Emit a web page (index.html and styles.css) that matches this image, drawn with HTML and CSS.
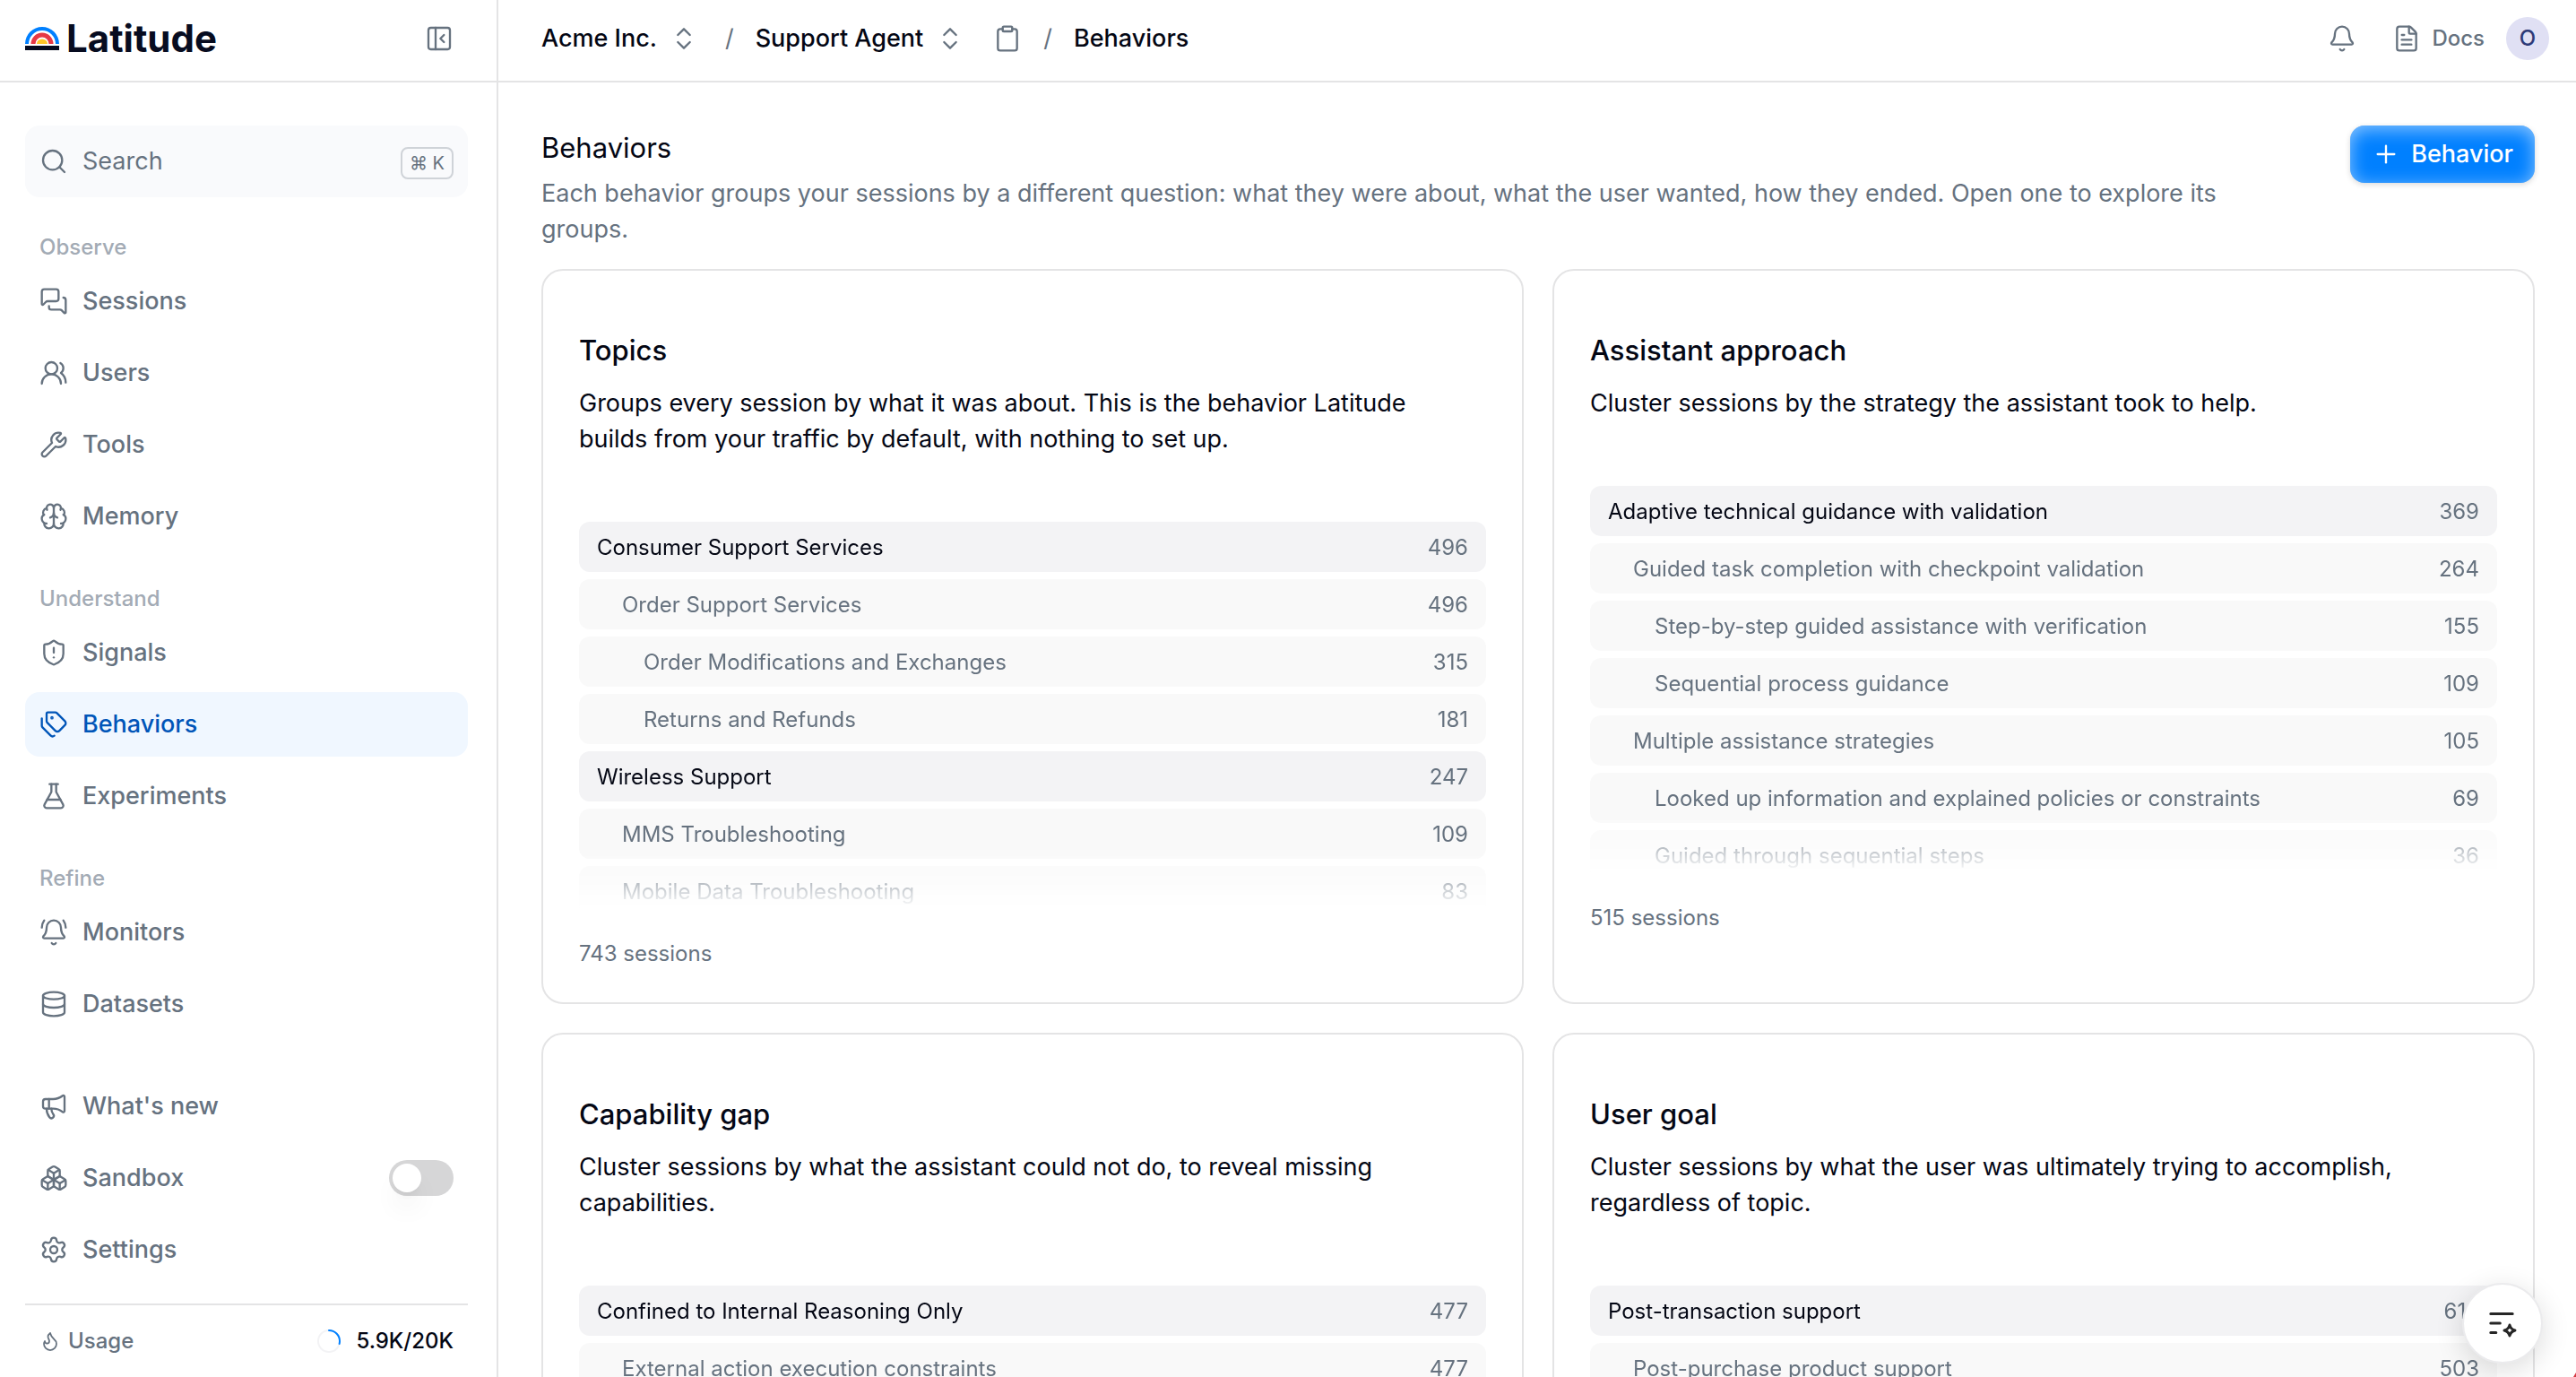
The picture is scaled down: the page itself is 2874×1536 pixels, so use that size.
FILE: index.html
```html
<!DOCTYPE html>
<html lang="en">
<head>
<meta charset="utf-8">
<title>Behaviors - Latitude</title>
<link rel="stylesheet" href="styles.css">
</head>
<body>
<div class="app">
  <aside class="sidebar">
    <div class="topbar sidebar-top">
      <a class="brand" href="#">
        <svg class="brand-mark" viewBox="0 0 38 26" aria-hidden="true">
          <path d="M0 19a19 19 0 0 1 38 0h-4a15 15 0 0 0-30 0z" fill="#0080ff"/>
          <path d="M6.500 19a12.500 12.500 0 0 1 25 0h-5a7.500 7.500 0 0 0-15 0z" fill="#e63946"/>
          <path d="M13 19a6 5.500 0 0 1 12 0z" fill="#ffc629"/>
          <path d="M0 21h38v5H0z" fill="#070c20"/>
        </svg>
        <span>Latitude</span>
      </a>
      <button class="icon-button" type="button" aria-label="Collapse sidebar">
        <svg class="icon" viewBox="0 0 24 24"><rect x="3" y="3" width="18" height="18" rx="2"/><path d="M9 3v18"/><path d="m16 15-3-3 3-3"/></svg>
      </button>
    </div>

    <nav class="side-nav">
      <button class="search" type="button">
        <svg class="icon" viewBox="0 0 24 24"><circle cx="11" cy="11" r="8"/><path d="m21 21-4.300-4.300"/></svg>
        <span class="search-label">Search</span>
        <kbd>⌘ K</kbd>
      </button>

      <section class="nav-group">
        <h2 class="nav-heading">Observe</h2>
        <a class="nav-item" href="#"><svg class="icon" viewBox="0 0 24 24"><path d="M16 10a2 2 0 0 1-2 2H6.828a2 2 0 0 0-1.414.586l-2.202 2.202A.71.71 0 0 1 2 14.286V4a2 2 0 0 1 2-2h10a2 2 0 0 1 2 2z"/><path d="M20 9a2 2 0 0 1 2 2v10.286a.71.71 0 0 1-1.212.502l-2.202-2.202A2 2 0 0 0 17.172 19H10a2 2 0 0 1-2-2v-1"/></svg>Sessions</a>
        <a class="nav-item" href="#"><svg class="icon" viewBox="0 0 24 24"><path d="M18 21a8 8 0 0 0-16 0"/><circle cx="10" cy="8" r="5"/><path d="M22 20c0-3.370-2-6.500-4-8a5 5 0 0 0-.45-8.300"/></svg>Users</a>
        <a class="nav-item" href="#"><svg class="icon" viewBox="0 0 24 24"><path d="M14.700 6.300a1 1 0 0 0 0 1.400l1.600 1.600a1 1 0 0 0 1.400 0l3.106-3.105c.32-.322.863-.22.983.218a6 6 0 0 1-8.259 7.057l-7.910 7.910a1 1 0 0 1-2.999-3l7.910-7.910a6 6 0 0 1 7.057-8.259c.438.12.54.662.219.984z"/></svg>Tools</a>
        <a class="nav-item" href="#"><svg class="icon" viewBox="0 0 24 24"><path d="M12 18V5"/><path d="M15 13a4.170 4.170 0 0 1-3-4 4.170 4.170 0 0 1-3 4"/><path d="M17.598 6.500A3 3 0 1 0 12 5a3 3 0 1 0-5.598 1.500"/><path d="M17.997 5.125a4 4 0 0 1 2.526 5.770"/><path d="M18 18a4 4 0 0 0 2-7.464"/><path d="M19.967 17.483A4 4 0 1 1 12 18a4 4 0 1 1-7.967-.517"/><path d="M6 18a4 4 0 0 1-2-7.464"/><path d="M6.003 5.125a4 4 0 0 0-2.526 5.770"/></svg>Memory</a>
      </section>

      <section class="nav-group">
        <h2 class="nav-heading">Understand</h2>
        <a class="nav-item" href="#"><svg class="icon" viewBox="0 0 24 24"><path d="M20 13c0 5-3.500 7.500-7.660 8.950a1 1 0 0 1-.67-.01C7.500 20.500 4 18 4 13V6a1 1 0 0 1 1-1c2 0 4.500-1.200 6.240-2.720a1.170 1.170 0 0 1 1.520 0C14.510 3.810 17 5 19 5a1 1 0 0 1 1 1z"/><path d="M12 8v4"/><path d="M12 16h.01"/></svg>Signals</a>
        <a class="nav-item is-active" href="#" aria-current="page"><svg class="icon" viewBox="0 0 24 24"><path d="M13.172 2a2 2 0 0 1 1.414.586l6.710 6.710a2.400 2.400 0 0 1 0 3.408l-4.592 4.592a2.400 2.400 0 0 1-3.408 0l-6.710-6.710A2 2 0 0 1 6 9.172V3a1 1 0 0 1 1-1z"/><path d="M2 7v6.172a2 2 0 0 0 .586 1.414l6.710 6.710a2.400 2.400 0 0 0 3.191.193"/><circle cx="10.500" cy="6.500" r=".5" fill="currentColor"/></svg>Behaviors</a>
        <a class="nav-item" href="#"><svg class="icon" viewBox="0 0 24 24"><path d="M14 2v6a2 2 0 0 0 .245.96l5.510 10.080A2 2 0 0 1 18 22H6a2 2 0 0 1-1.755-2.960l5.510-10.080A2 2 0 0 0 10 8V2"/><path d="M6.453 15h11.094"/><path d="M8.500 2h7"/></svg>Experiments</a>
      </section>

      <section class="nav-group">
        <h2 class="nav-heading">Refine</h2>
        <a class="nav-item" href="#"><svg class="icon" viewBox="0 0 24 24"><path d="M10.268 21a2 2 0 0 0 3.464 0"/><path d="M22 8c0-2.300-.8-4.300-2-6"/><path d="M3.262 15.326A1 1 0 0 0 4 17h16a1 1 0 0 0 .74-1.673C19.410 13.956 18 12.499 18 8A6 6 0 0 0 6 8c0 4.499-1.411 5.956-2.738 7.326"/><path d="M4 2C2.800 3.700 2 5.700 2 8"/></svg>Monitors</a>
        <a class="nav-item" href="#"><svg class="icon" viewBox="0 0 24 24"><ellipse cx="12" cy="5" rx="9" ry="3"/><path d="M3 5V19A9 3 0 0 0 21 19V5"/><path d="M3 12A9 3 0 0 0 21 12"/></svg>Datasets</a>
      </section>
    </nav>

    <div class="side-bottom">
      <div class="nav-group">
        <a class="nav-item" href="#"><svg class="icon" viewBox="0 0 24 24"><path d="M11 6a13 13 0 0 0 8.400-2.800A1 1 0 0 1 21 4v12a1 1 0 0 1-1.600.8A13 13 0 0 0 11 14H5a2 2 0 0 1-2-2V8a2 2 0 0 1 2-2z"/><path d="M6 14a12 12 0 0 0 2.400 7.200 2 2 0 0 0 3.200-2.400A8 8 0 0 1 10 14"/><path d="M8 6v8"/></svg>What's new</a>
        <label class="nav-item"><svg class="icon" viewBox="0 0 24 24"><path d="M2.970 12.920A2 2 0 0 0 2 14.630v3.240a2 2 0 0 0 .97 1.710l3 1.800a2 2 0 0 0 2.060 0L12 19v-5.500l-5-3-4.030 2.420Z"/><path d="m7 16.500-4.740-2.850"/><path d="m7 16.500 5-3"/><path d="M7 16.500v5.170"/><path d="M12 13.500V19l3.970 2.380a2 2 0 0 0 2.060 0l3-1.800a2 2 0 0 0 .97-1.710v-3.240a2 2 0 0 0-.97-1.710L17 10.500l-5 3Z"/><path d="m17 16.500-5-3"/><path d="m17 16.500 4.740-2.850"/><path d="M17 16.500v5.170"/><path d="M7.970 4.420A2 2 0 0 0 7 6.130v4.370l5 3 5-3V6.130a2 2 0 0 0-.97-1.710l-3-1.800a2 2 0 0 0-2.060 0l-3 1.800Z"/><path d="M12 8 7.260 5.150"/><path d="m12 8 4.740-2.850"/><path d="M12 13.500V8"/></svg>Sandbox<input class="switch" type="checkbox" role="switch"></label>
        <a class="nav-item" href="#"><svg class="icon" viewBox="0 0 24 24"><path d="M9.671 4.136a2.340 2.340 0 0 1 4.659 0 2.340 2.340 0 0 0 3.319 1.915 2.340 2.340 0 0 1 2.330 4.033 2.340 2.340 0 0 0 0 3.831 2.340 2.340 0 0 1-2.330 4.033 2.340 2.340 0 0 0-3.319 1.915 2.340 2.340 0 0 1-4.659 0 2.340 2.340 0 0 0-3.320-1.915 2.340 2.340 0 0 1-2.330-4.033 2.340 2.340 0 0 0 0-3.831A2.340 2.340 0 0 1 6.350 6.051a2.340 2.340 0 0 0 3.319-1.915"/><circle cx="12" cy="12" r="3"/></svg>Settings</a>
      </div>
      <a class="usage" href="#">
        <svg class="icon icon-small" viewBox="0 0 24 24"><path d="M12 3q1 4 4 6.500t3 5.500a1 1 0 0 1-14 0 5 5 0 0 1 1-3 1 1 0 0 0 5 0c0-2-1.500-3-1.500-5q0-2 2.500-4"/></svg>
        <span>Usage</span>
        <span class="usage-value">
          <svg class="usage-ring" viewBox="0 0 28 28" aria-hidden="true"><circle cx="14" cy="14" r="12" stroke="#f3f3f5"/><circle cx="14" cy="14" r="12" stroke="#0080ff" pathLength="100" stroke-dasharray="29 100" transform="rotate(-90 14 14)"/></svg>
          5.9K/20K
        </span>
      </a>
    </div>
  </aside>

  <div class="workspace">
    <header class="topbar main-top">
      <nav class="crumbs" aria-label="Breadcrumb">
        <button class="crumb" type="button">Acme Inc.<svg class="icon" viewBox="0 0 24 24"><path d="m7 15 5 5 5-5"/><path d="m7 9 5-5 5 5"/></svg></button>
        <span class="crumb-divider crumb-divider-wide">/</span>
        <button class="crumb" type="button">Support Agent<svg class="icon" viewBox="0 0 24 24"><path d="m7 15 5 5 5-5"/><path d="m7 9 5-5 5 5"/></svg></button>
        <button class="icon-button copy-button" type="button" aria-label="Copy project"><svg class="icon" viewBox="0 0 24 24"><rect x="8" y="2" width="8" height="4" rx="1"/><path d="M16 4h2a2 2 0 0 1 2 2v14a2 2 0 0 1-2 2H6a2 2 0 0 1-2-2V6a2 2 0 0 1 2-2h2"/></svg></button>
        <span class="crumb-divider">/</span>
        <span class="crumb" aria-current="page">Behaviors</span>
      </nav>
      <div class="top-actions">
        <button class="icon-button" type="button" aria-label="Notifications"><svg class="icon" viewBox="0 0 24 24"><path d="M10.268 21a2 2 0 0 0 3.464 0"/><path d="M3.262 15.326A1 1 0 0 0 4 17h16a1 1 0 0 0 .74-1.673C19.410 13.956 18 12.499 18 8A6 6 0 0 0 6 8c0 4.499-1.411 5.956-2.738 7.326"/></svg></button>
        <a class="docs" href="#"><svg class="icon" viewBox="0 0 24 24"><path d="M6 22a2 2 0 0 1-2-2V4a2 2 0 0 1 2-2h8a2.400 2.400 0 0 1 1.704.706l3.588 3.588A2.400 2.400 0 0 1 20 8v12a2 2 0 0 1-2 2z"/><path d="M14 2v5a1 1 0 0 0 1 1h5"/><path d="M10 9H8"/><path d="M16 13H8"/><path d="M16 17H8"/></svg>Docs</a>
        <button class="avatar" type="button" aria-label="Account">O</button>
      </div>
    </header>

    <main class="content">
      <div class="page-head">
        <div class="page-intro">
          <h1>Behaviors</h1>
          <p>Each behavior groups your sessions by a different question: what they were about, what the user wanted, how they ended. Open one to explore its groups.</p>
        </div>
        <button class="primary" type="button"><svg class="icon" viewBox="0 0 24 24"><path d="M5 12h14"/><path d="M12 5v14"/></svg>Behavior</button>
      </div>

      <div class="cards">
        <article class="card">
          <h2>Topics</h2>
          <p>Groups every session by what it was about. This is the behavior Latitude builds from your traffic by default, with nothing to set up.</p>
          <ul class="tree">
            <li class="root"><span>Consumer Support Services</span><span class="count">496</span></li>
            <li class="child"><span>Order Support Services</span><span class="count">496</span></li>
            <li class="leaf"><span>Order Modifications and Exchanges</span><span class="count">315</span></li>
            <li class="leaf"><span>Returns and Refunds</span><span class="count">181</span></li>
            <li class="root"><span>Wireless Support</span><span class="count">247</span></li>
            <li class="child"><span>MMS Troubleshooting</span><span class="count">109</span></li>
            <li class="child"><span>Mobile Data Troubleshooting</span><span class="count">83</span></li>
          </ul>
          <footer>743 sessions</footer>
        </article>

        <article class="card">
          <h2>Assistant approach</h2>
          <p>Cluster sessions by the strategy the assistant took to help.</p>
          <ul class="tree">
            <li class="root"><span>Adaptive technical guidance with validation</span><span class="count">369</span></li>
            <li class="child"><span>Guided task completion with checkpoint validation</span><span class="count">264</span></li>
            <li class="leaf"><span>Step-by-step guided assistance with verification</span><span class="count">155</span></li>
            <li class="leaf"><span>Sequential process guidance</span><span class="count">109</span></li>
            <li class="child"><span>Multiple assistance strategies</span><span class="count">105</span></li>
            <li class="leaf"><span>Looked up information and explained policies or constraints</span><span class="count">69</span></li>
            <li class="leaf"><span>Guided through sequential steps</span><span class="count">36</span></li>
          </ul>
          <footer>515 sessions</footer>
        </article>

        <article class="card">
          <h2>Capability gap</h2>
          <p>Cluster sessions by what the assistant could not do, to reveal missing capabilities.</p>
          <ul class="tree">
            <li class="root"><span>Confined to Internal Reasoning Only</span><span class="count">477</span></li>
            <li class="child"><span>External action execution constraints</span><span class="count">477</span></li>
          </ul>
        </article>

        <article class="card">
          <h2>User goal</h2>
          <p>Cluster sessions by what the user was ultimately trying to accomplish, regardless of topic.</p>
          <ul class="tree">
            <li class="root"><span>Post-transaction support</span><span class="count">618</span></li>
            <li class="child"><span>Post-purchase product support</span><span class="count">503</span></li>
          </ul>
        </article>
      </div>
    </main>
  </div>

  <button class="fab" type="button" aria-label="Open assistant">
    <svg viewBox="0 0 32 32" aria-hidden="true"><path d="M2.800 5.500h24.400M2.800 16h10.500M2.800 26.500h6"/><path d="M24 18q1.200 4.800 6 6-4.800 1.200-6 6-1.200-4.800-6-6 4.800-1.200 6-6z"/></svg>
  </button>
  <span class="corner-flag"></span>
</div>
</body>
</html>
```
FILE: styles.css
```css
:root {
  --ink: #040714;
  --muted: #66727f;
  --faint: #a3abb5;
  --line: #e4e4e5;
  --blue: #0080ff;
}

* {
  box-sizing: border-box;
}

body,
h1,
h2,
p,
ul {
  margin: 0;
  padding: 0;
}

body {
  background: #fff;
  color: var(--ink);
  font-family: Inter, "Liberation Sans", sans-serif;
  font-size: 27px;
  line-height: 40px;
}

a {
  color: inherit;
  text-decoration: none;
}

button {
  padding: 0;
  border: 0;
  background: none;
  color: inherit;
  font: inherit;
}

.icon {
  display: block;
  flex: none;
  width: 32px;
  height: 32px;
  fill: none;
  stroke: currentColor;
  stroke-width: 1.75;
  stroke-linecap: round;
  stroke-linejoin: round;
}

.icon-small {
  width: 24px;
  height: 24px;
}

.icon-button {
  color: var(--muted);
}

.app {
  display: flex;
  height: 100vh;
  overflow: hidden;
}

.topbar {
  display: flex;
  flex: none;
  align-items: center;
  justify-content: space-between;
  height: 92px;
  padding-bottom: 4px;
  border-bottom: 2px solid var(--line);
}

/* Sidebar */

.sidebar {
  display: flex;
  flex: none;
  flex-direction: column;
  width: 556px;
  border-right: 2px solid var(--line);
}

.sidebar-top {
  padding-right: 48px;
  padding-left: 28px;
}

.brand {
  display: flex;
  align-items: center;
  gap: 8px;
  color: #070c20;
  font-size: 42px;
  font-weight: 700;
}

.brand-mark {
  width: 38px;
  height: 26px;
}

.side-nav {
  display: flex;
  flex-direction: column;
  gap: 40px;
  padding: 48px 32px 0 28px;
}

.search {
  display: flex;
  align-items: baseline;
  gap: 16px;
  padding: 20px 16px;
  border-radius: 16px;
  background: #f9fafc;
  color: var(--muted);
  text-align: left;
}

.search .icon {
  align-self: center;
}

.search-label {
  flex: 1;
}

kbd {
  padding: 0 8px;
  border: 2px solid #cfd3d8;
  border-radius: 8px;
  font-family: Inter, "DejaVu Sans", sans-serif;
  font-size: 20px;
  line-height: 32px;
}

.nav-group {
  display: flex;
  flex-direction: column;
  gap: 8px;
}

.nav-heading {
  padding-left: 16px;
  color: var(--faint);
  font-size: 24px;
  font-weight: 500;
  line-height: 32px;
}

.nav-item {
  display: flex;
  align-items: center;
  gap: 16px;
  height: 72px;
  padding: 0 16px;
  border-radius: 16px;
  color: var(--muted);
  font-weight: 500;
}

.nav-item.is-active {
  background: #f0f7ff;
  color: #0055b8;
}

.side-bottom {
  margin-top: auto;
  padding: 0 32px 0 28px;
}

.switch {
  display: flex;
  appearance: none;
  width: 72px;
  height: 40px;
  margin: 0 0 0 auto;
  padding: 4px;
  border-radius: 20px;
  background: #d6d6d7;
}

.switch::before {
  width: 32px;
  height: 32px;
  border-radius: 50%;
  background: #fff;
  box-shadow: 0 20px 30px -6px rgb(0 0 0 / 10%), 0 8px 12px -8px rgb(0 0 0 / 10%);
  content: "";
}

.switch:checked {
  justify-content: flex-end;
  background: var(--blue);
}

.usage {
  display: flex;
  align-items: center;
  gap: 8px;
  height: 82px;
  margin-top: 24px;
  padding: 0 16px;
  border-top: 2px solid var(--line);
  color: var(--muted);
  font-size: 24px;
  font-weight: 500;
}

.usage-value {
  display: flex;
  align-items: center;
  gap: 16px;
  margin-left: auto;
  color: var(--ink);
}

.usage-ring {
  width: 28px;
  height: 28px;
  fill: none;
  stroke-width: 2;
  stroke-linecap: round;
}

/* Header */

.workspace {
  display: flex;
  flex: 1;
  flex-direction: column;
  min-width: 0;
}

.main-top {
  padding-right: 30px;
  padding-left: 48px;
}

.crumbs {
  display: flex;
  align-items: center;
  gap: 24px;
  font-weight: 500;
}

.crumb {
  display: flex;
  align-items: center;
  gap: 14px;
}

.crumb .icon,
.crumb-divider {
  color: var(--muted);
}

.crumb-divider {
  font-weight: 400;
}

.crumb-divider-wide {
  margin-left: 6px;
}

.copy-button {
  margin-left: 8px;
}

.top-actions {
  display: flex;
  align-items: center;
}

.docs {
  display: flex;
  align-items: center;
  gap: 12px;
  margin-right: 24px;
  margin-left: 40px;
  color: var(--muted);
  font-size: 24px;
  font-weight: 500;
}

.avatar {
  width: 48px;
  height: 48px;
  border-radius: 50%;
  background: #e0e0f4;
  color: #2e3a78;
  font-size: 24px;
  font-weight: 500;
}

/* Page */

.content {
  flex: 1;
  overflow: hidden;
  padding: 48px 46px 48px 48px;
}

.page-head {
  display: flex;
  align-items: flex-start;
  justify-content: space-between;
  gap: 120px;
  margin-bottom: 24px;
}

.page-intro {
  display: flex;
  flex-direction: column;
  gap: 6px;
  color: var(--muted);
}

h1 {
  color: var(--ink);
  font-size: 31px;
  font-weight: 400;
  line-height: 50px;
}

.primary {
  display: flex;
  flex: none;
  align-items: center;
  gap: 12px;
  height: 64px;
  padding: 0 24px;
  border-radius: 16px;
  background: var(--blue);
  box-shadow: inset 0 4px 20px rgb(255 255 255 / 55%), 0 2px 6px rgb(0 0 0 / 15%);
  color: #fff;
  font-weight: 500;
}

.cards {
  display: grid;
  grid-template-columns: 1fr 1fr;
  gap: 32px;
}

.card {
  padding: 64px 40px 38px;
  border: 2px solid var(--line);
  border-radius: 24px;
}

.card h2 {
  margin-bottom: 14px;
  font-size: 31px;
  font-weight: 500;
  line-height: 50px;
}

.card p {
  padding-right: 40px;
}

.tree {
  display: flex;
  flex-direction: column;
  gap: 8px;
  height: 432px;
  margin: 72px 0 32px;
  overflow: hidden;
  font-size: 24px;
  line-height: 32px;
  list-style: none;
  mask-image: linear-gradient(#000 calc(100% - 64px), transparent);
}

.tree li {
  display: flex;
  flex: none;
  align-items: center;
  justify-content: space-between;
  height: 56px;
  padding-top: 2px;
  padding-right: 20px;
  border-radius: 12px;
  background: #f9f9f9;
  color: var(--muted);
}

.tree .root {
  padding-left: 20px;
  background: #f3f3f5;
  color: var(--ink);
}

.tree .child {
  padding-left: 48px;
}

.tree .leaf {
  padding-left: 72px;
}

.tree .count {
  color: var(--muted);
}

.card footer {
  padding-top: 2px;
  color: var(--muted);
  font-size: 24px;
  line-height: 32px;
}

/* Floating controls */

.fab {
  position: fixed;
  right: 37px;
  bottom: 15px;
  display: grid;
  place-items: center;
  width: 90px;
  height: 90px;
  border: 2px solid #ebebed;
  border-radius: 50%;
  background: #fff;
  box-shadow: 0 8px 32px rgb(0 0 0 / 14%);
}

.fab svg {
  width: 32px;
  height: 32px;
  fill: none;
  stroke: #262626;
  stroke-width: 3;
  stroke-linecap: round;
  stroke-linejoin: round;
}

.corner-flag {
  position: fixed;
  right: 0;
  bottom: 0;
  width: 3px;
  height: 5px;
  background: #d43a44;
  clip-path: polygon(100% 0, 100% 100%, 0 100%);
}
```
